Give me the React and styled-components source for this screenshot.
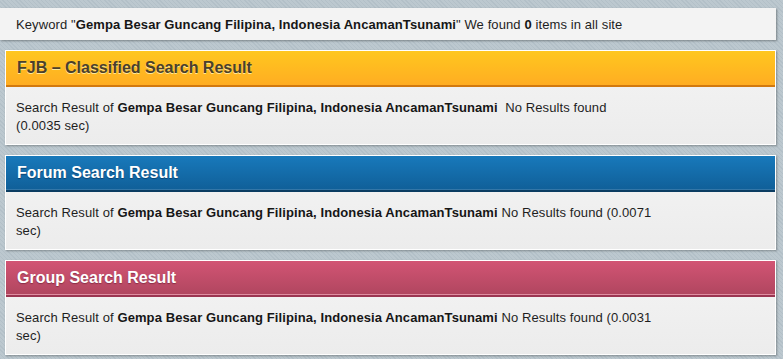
import React from 'react';
import styled, { createGlobalStyle } from 'styled-components';

const GlobalStyle = createGlobalStyle`
  html, body {
    margin: 0;
    padding: 0;
  }
  body {
    font-family: "Liberation Sans", Arial, sans-serif;
    font-size: 13px;
    letter-spacing: 0.1px;
    color: #222;
    background-color: #b8c4cc;
    background-image: repeating-linear-gradient(
      45deg,
      #b3c0c8 0px,
      #b3c0c8 1px,
      #bcc8cf 1px,
      #bcc8cf 3px
    );
    min-height: 100vh;
  }
`;

const Page = styled.div`
  padding: 8px 7px 8px 0;
`;

const KeywordBar = styled.div`
  height: 32px;
  display: flex;
  align-items: center;
  padding-left: 16px;
  background: #f3f3f3;
  box-shadow: 1px 1px 2px rgba(0, 0, 0, 0.35);
  color: #1e1e1e;

  b {
    color: #161616;
  }
`;

const themes = {
  orange: {
    top: '#ffc71f',
    bottom: '#ffad22',
    line: '#d2790f',
    inner: 'rgba(255,255,255,0)',
    text: '#4a3f2c',
    shadow: '0 1px 0 rgba(255, 240, 170, 0.9)',
  },
  blue: {
    top: '#1879bb',
    bottom: '#105f98',
    line: '#0b3c61',
    inner: 'rgba(255,255,255,0.15)',
    text: '#ffffff',
    shadow: '0 1px 1px rgba(0, 40, 80, 0.6)',
  },
  red: {
    top: '#d25474',
    bottom: '#b0465f',
    line: '#9b3551',
    inner: 'rgba(255,190,205,0.6)',
    text: '#ffffff',
    shadow: '0 1px 1px rgba(90, 20, 40, 0.5)',
  },
};

const Panel = styled.section`
  margin: 10px 0 0 5px;
  border: 1px solid #ffffff;
  box-shadow: 1px 1px 2px rgba(0, 0, 0, 0.3);
  background: linear-gradient(#f4f4f4, #ececec);
`;

const Header = styled.h2`
  margin: 0;
  height: 34px;
  display: flex;
  align-items: center;
  padding-left: 11px;
  font-family: "Liberation Sans", Arial, sans-serif;
  font-size: 16px;
  font-weight: bold;
  letter-spacing: 0;
  color: ${(p) => themes[p.$tone].text};
  text-shadow: ${(p) => themes[p.$tone].shadow};
  background: linear-gradient(${(p) => themes[p.$tone].top}, ${(p) => themes[p.$tone].bottom});
  border-bottom: 2px solid ${(p) => themes[p.$tone].line};
  box-shadow: inset 0 -1px 0 ${(p) => themes[p.$tone].inner};
`;

const Body = styled.div`
  padding: 12px 10px 9px 10px;
  height: 36px;
  line-height: 18px;
`;

const Text = styled.p`
  margin: 0;
  width: 637px;
  color: #1e1e1e;

  b {
    color: #161616;
  }
`;

const keyword = 'Gempa Besar Guncang Filipina, Indonesia AncamanTsunami';

const results = [
  { tone: 'orange', title: 'FJB \u2013 Classified Search Result', gap: '\u00a0 ', time: '0.0035' },
  { tone: 'blue', title: 'Forum Search Result', gap: ' ', time: '0.0071' },
  { tone: 'red', title: 'Group Search Result', gap: ' ', time: '0.0031' },
];

export default function App() {
  return (
    <Page>
      <GlobalStyle />
      <KeywordBar>
        <span>
          Keyword "<b>{keyword}</b>" We found <b>0</b> items in all site
        </span>
      </KeywordBar>
      {results.map((r) => (
        <Panel key={r.tone}>
          <Header $tone={r.tone}>{r.title}</Header>
          <Body>
            <Text>
              Search Result of <b>{keyword}</b>
              {r.gap}No Results found ({r.time} sec)
            </Text>
          </Body>
        </Panel>
      ))}
    </Page>
  );
}
